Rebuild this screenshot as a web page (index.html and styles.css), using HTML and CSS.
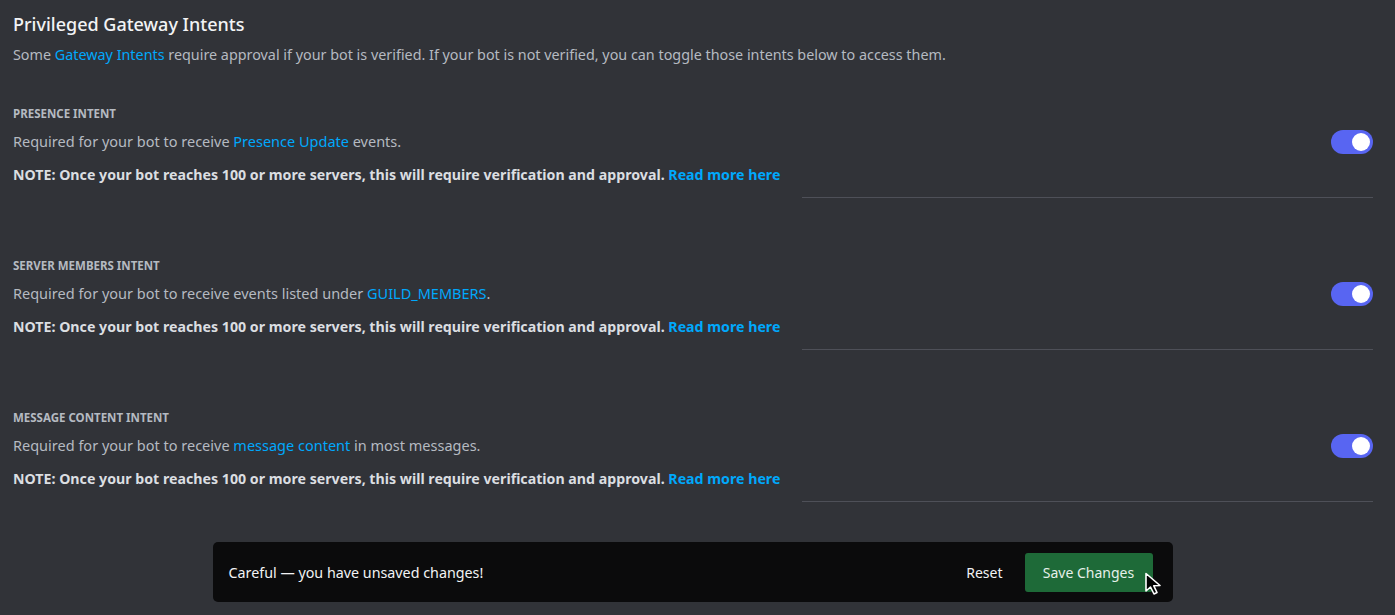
FILE: index.html
```html
<!DOCTYPE html>
<html>
<head>
<meta charset="utf-8">
<link rel="stylesheet" href="styles.css">
</head>
<body>
<div class="page">
  <h1 class="title">Privileged Gateway Intents</h1>
  <p class="desc">Some <a class="link">Gateway Intents</a> require approval if your bot is verified. If your bot is not verified, you can toggle those intents below to access them.</p>

  <section class="intent">
    <div class="label">PRESENCE INTENT</div>
    <div class="row">
      <div class="text">Required for your bot to receive <a class="link">Presence Update</a> events.</div>
      <div class="toggle"><span class="knob"></span></div>
    </div>
    <div class="note">NOTE: Once your bot reaches 100 or more servers, this will require verification and approval. <a class="link strong">Read more here</a></div>
    <div class="sep"></div>
  </section>

  <section class="intent">
    <div class="label">SERVER MEMBERS INTENT</div>
    <div class="row">
      <div class="text">Required for your bot to receive events listed under <a class="link">GUILD_MEMBERS</a>.</div>
      <div class="toggle"><span class="knob"></span></div>
    </div>
    <div class="note">NOTE: Once your bot reaches 100 or more servers, this will require verification and approval. <a class="link strong">Read more here</a></div>
    <div class="sep"></div>
  </section>

  <section class="intent">
    <div class="label">MESSAGE CONTENT INTENT</div>
    <div class="row">
      <div class="text">Required for your bot to receive <a class="link">message content</a> in most messages.</div>
      <div class="toggle"><span class="knob"></span></div>
    </div>
    <div class="note">NOTE: Once your bot reaches 100 or more servers, this will require verification and approval. <a class="link strong">Read more here</a></div>
    <div class="sep"></div>
  </section>

  <div class="notice-wrap">
    <div class="notice">
      <span class="notice-text">Careful — you have unsaved changes!</span>
      <div class="actions">
        <button class="reset">Reset</button>
        <button class="save">Save Changes</button>
      </div>
      <svg class="cursor" width="20" height="24" viewBox="0 0 20 24"><path d="M2 1.5 L2 19 L6.5 15 L10 22 L13 20.5 L9.8 13.8 L16 13.5 Z" fill="#000" stroke="#fff" stroke-width="1.6" stroke-linejoin="round"/></svg>
    </div>
  </div>
</div>
</body>
</html>
```
FILE: styles.css
```css
html, body {
  margin: 0;
  padding: 0;
  background: #313338;
  height: 100%;
  overflow: hidden;
}
body {
  font-family: "Noto Sans", "Open Sans", sans-serif;
  color: #b5bac1;
}
.page {
  padding: 12px 22px 0 13px;
}
.title {
  margin: 0;
  font-size: 18px;
  font-weight: 500;
  line-height: 24px;
  color: #f2f3f5;
}
.desc {
  margin: 9px 0 0;
  font-size: 14.35px;
  line-height: 20px;
  color: #b5bac1;
}
.link {
  color: #00a8fc;
  text-decoration: none;
}
.link.strong {
  font-weight: 700;
}
.intent {
  margin-top: 41px;
}
.intent + .intent {
  margin-top: 60px;
}
.label {
  font-size: 11.5px;
  font-weight: 700;
  line-height: 16px;
  color: #b5bac1;
}
.row {
  display: flex;
  justify-content: space-between;
  align-items: center;
  margin-top: 5px;
  height: 28px;
}
.text {
  font-size: 14.5px;
  line-height: 20px;
  color: #b5bac1;
}
.toggle {
  width: 42px;
  height: 24px;
  border-radius: 12px;
  background: #5865f2;
  position: relative;
  margin-top: 2px;
}
.knob {
  position: absolute;
  right: 3px;
  top: 3px;
  width: 18px;
  height: 18px;
  border-radius: 50%;
  background: #fff;
}
.note {
  margin-top: 10px;
  font-size: 14.2px;
  line-height: 20px;
  font-weight: 700;
  color: #dbdee1;
}
.sep {
  margin: 12px 0 0 789px;
  height: 1px;
  background: #4e5058;
}
.notice-wrap {
  display: flex;
  justify-content: center;
  margin-top: 40px;
  padding-right: 1px;
}
.notice {
  position: relative;
  width: 960px;
  height: 60px;
  box-sizing: border-box;
  background: #0b0b0c;
  border-radius: 5px;
  display: flex;
  align-items: center;
  justify-content: space-between;
  padding: 0 20px 0 16px;
}
.notice-text {
  font-size: 14.3px;
  color: #f2f3f5;
}
.actions {
  display: flex;
  align-items: center;
  gap: 18px;
}
.reset {
  background: none;
  border: 0;
  font-family: inherit;
  font-size: 14px;
  color: #f2f3f5;
  padding: 0 4px;
}
.save {
  background: #1e6a38;
  border: 0;
  border-radius: 3px;
  font-family: inherit;
  font-size: 14px;
  color: #e6f0ea;
  width: 128px;
  height: 39px;
  padding: 0;
}
.cursor {
  position: absolute;
  left: 931px;
  top: 30px;
}
```
